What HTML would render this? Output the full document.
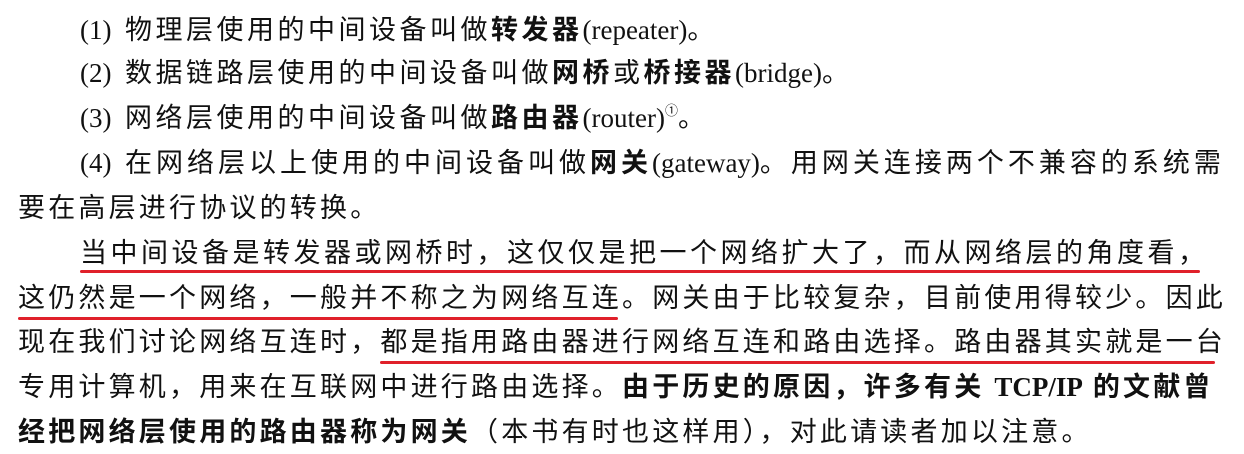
<!DOCTYPE html><html><head><meta charset="utf-8"><style>
body{margin:0;width:1244px;height:454px;background:#fff;overflow:hidden;position:relative;}
.l{position:absolute;white-space:nowrap;height:44px;line-height:44px;font-size:27px;letter-spacing:3.2px;color:#111;font-family:"Liberation Serif","Noto Sans CJK SC",serif;}
.e{letter-spacing:0;}
b{font-weight:bold;}
.u{position:absolute;height:3px;background:#e0202a;border-radius:2px;}
sup{font-size:13px;letter-spacing:0;vertical-align:top;line-height:30px;}
</style></head><body>
<div class="l" style="left:80px;top:8px;letter-spacing:3.5px"><span class="e">(1)&nbsp;&nbsp;</span>物理层使用的中间设备叫做<b>转发器</b><span class="e">(repeater)</span>。</div>
<div class="l" style="left:80px;top:51px;letter-spacing:3.5px"><span class="e">(2)&nbsp;&nbsp;</span>数据链路层使用的中间设备叫做<b>网桥</b>或<b>桥接器</b><span class="e">(bridge)</span>。</div>
<div class="l" style="left:80px;top:96px;letter-spacing:3.5px"><span class="e">(3)&nbsp;&nbsp;</span>网络层使用的中间设备叫做<b>路由器</b><span class="e">(router)<sup>①</sup></span>。</div>
<div class="l" style="left:80px;top:141px;letter-spacing:4.0px"><span class="e">(4)&nbsp;&nbsp;</span>在网络层以上使用的中间设备叫做<b>网关</b><span class="e">(gateway)</span>。用网关连接两个不兼容的系统需</div>
<div class="l" style="left:18px;top:186px">要在高层进行协议的转换。</div>
<div class="l" style="left:80px;top:231px;letter-spacing:3.5px">当中间设备是转发器或网桥时，这仅仅是把一个网络扩大了，而从网络层的角度看，</div>
<div class="l" style="left:18px;top:276px">这仍然是一个网络，一般并不称之为网络互连。网关由于比较复杂，目前使用得较少。因此</div>
<div class="l" style="left:18px;top:320px">现在我们讨论网络互连时，都是指用路由器进行网络互连和路由选择。路由器其实就是一台</div>
<div class="l" style="left:18px;top:365px">专用计算机，用来在互联网中进行路由选择。<b>由于历史的原因，许多有关 <span class="e">TCP/IP</span> 的文献曾</b></div>
<div class="l" style="left:18px;top:410px"><b>经把网络层使用的路由器称为网关</b>（本书有时也这样用），对此请读者加以注意。</div>
<div class="u" style="left:80px;top:270px;width:1120px"></div>
<div class="u" style="left:18px;top:317px;width:600px"></div>
<div class="u" style="left:380px;top:361px;width:835px"></div>
</body></html>
